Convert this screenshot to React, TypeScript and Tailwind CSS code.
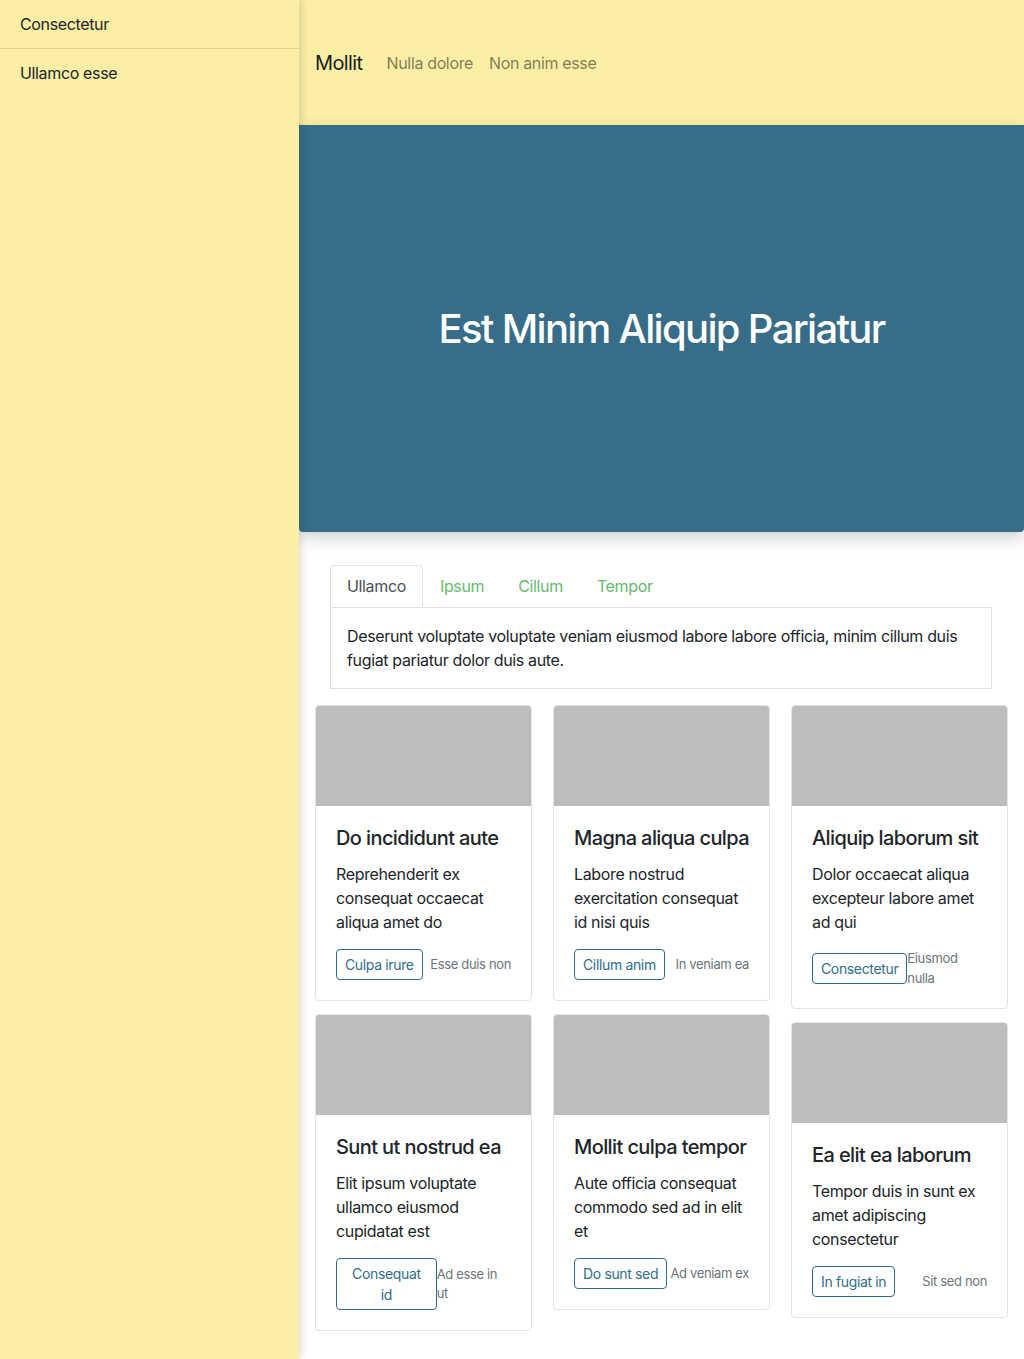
import React, { useState } from 'react';

type Card = {
  title: string;
  text: string;
  action: string;
  note: string;
};

const columns: Card[][] = [
  [
    { title: 'Do incididunt aute', text: 'Reprehenderit ex consequat occaecat aliqua amet do', action: 'Culpa irure', note: 'Esse duis non' },
    { title: 'Sunt ut nostrud ea', text: 'Elit ipsum voluptate ullamco eiusmod cupidatat est', action: 'Consequat id', note: 'Ad esse in ut' },
  ],
  [
    { title: 'Magna aliqua culpa', text: 'Labore nostrud exercitation consequat id nisi quis', action: 'Cillum anim', note: 'In veniam ea' },
    { title: 'Mollit culpa tempor', text: 'Aute officia consequat commodo sed ad in elit et', action: 'Do sunt sed', note: 'Ad veniam ex' },
  ],
  [
    { title: 'Aliquip laborum sit', text: 'Dolor occaecat aliqua excepteur labore amet ad qui', action: 'Consectetur', note: 'Eiusmod nulla' },
    { title: 'Ea elit ea laborum', text: 'Tempor duis in sunt ex amet adipiscing consectetur', action: 'In fugiat in', note: 'Sit sed non' },
  ],
];

const tabs = ['Ullamco', 'Ipsum', 'Cillum', 'Tempor'];

const CardItem: React.FC<{ card: Card }> = ({ card }) => (
  <div className="bg-white border border-[#e3e3e3] rounded overflow-hidden">
    <div className="h-[100px] bg-[#bdbdbd]" />
    <div className="p-5">
      <h5 className="text-[20px] leading-6 font-medium text-[#212529] tracking-[-0.03em]">{card.title}</h5>
      <p className="mt-3 text-base leading-6 text-[#212529]">{card.text}</p>
      <div className="mt-[15px] flex items-center justify-between">
        <button className="border border-[#2f6d8c] text-[#2f6d8c] rounded text-sm leading-[21px] px-2 py-1 bg-white">
          {card.action}
        </button>
        <span className="text-[13px] leading-[19.5px] text-[#6c757d]">{card.note}</span>
      </div>
    </div>
  </div>
);

const App: React.FC = () => {
  const [active, setActive] = useState(0);

  return (
    <div
      className="flex min-h-[1359px] bg-white tracking-[-0.022em]"
      style={{ fontFamily: 'Inter, "Noto Sans", sans-serif' }}
    >
      <aside className="w-[299px] shrink-0 bg-[#fbefa6] shadow-[2px_0_8px_rgba(0,0,0,0.15)] z-10 relative">
        <div className="px-5 py-3 leading-6 text-[#212529] border-b border-[#ddd191]">Consectetur</div>
        <div className="px-5 py-3 leading-6 text-[#212529]">Ullamco esse</div>
      </aside>

      <main className="flex-1 min-w-0">
        <nav className="h-[125px] bg-[#fbefa6] flex items-center px-4 gap-6">
          <span className="text-[20px] leading-7 text-[#1a1a1a] tracking-[-0.03em]">Mollit</span>
          <div className="flex items-center gap-4 text-base text-[#00000080]">
            <span>Nulla dolore</span>
            <span>Non anim esse</span>
          </div>
        </nav>

        <section className="h-[407px] bg-[#376d88] rounded-b flex items-center justify-center shadow-[0_6px_16px_rgba(0,0,0,0.18)]">
          <h1 className="text-[40px] font-medium text-white tracking-[-0.042em]">Est Minim Aliquip Pariatur</h1>
        </section>

        <div className="pt-[33px] px-4 pb-7">
          <div className="px-[15px] mr-[1px]">
            <div className="flex">
              {tabs.map((t, i) => (
                <button
                  key={t}
                  onClick={() => setActive(i)}
                  className={
                    i === active
                      ? 'px-4 h-[42px] leading-6 text-[#495057] border border-[#dee2e6] border-b-white rounded-t bg-white -mb-px relative'
                      : 'px-4 h-[42px] leading-6 text-[#66b96f] border border-transparent'
                  }
                >
                  {t}
                </button>
              ))}
            </div>
            <div className="border border-[#dee2e6] p-4 text-base leading-6 text-[#212529]">
              Deserunt voluptate voluptate veniam eiusmod labore labore officia, minim cillum duis fugiat pariatur dolor duis aute.
            </div>
          </div>

          <div className="mt-4 flex gap-[21px] items-start">
            {columns.map((col, ci) => (
              <div key={ci} className="flex-1 min-w-0 flex flex-col gap-[13px]">
                {col.map((c) => (
                  <CardItem key={c.title} card={c} />
                ))}
              </div>
            ))}
          </div>
        </div>
      </main>
    </div>
  );
};

export default App;
